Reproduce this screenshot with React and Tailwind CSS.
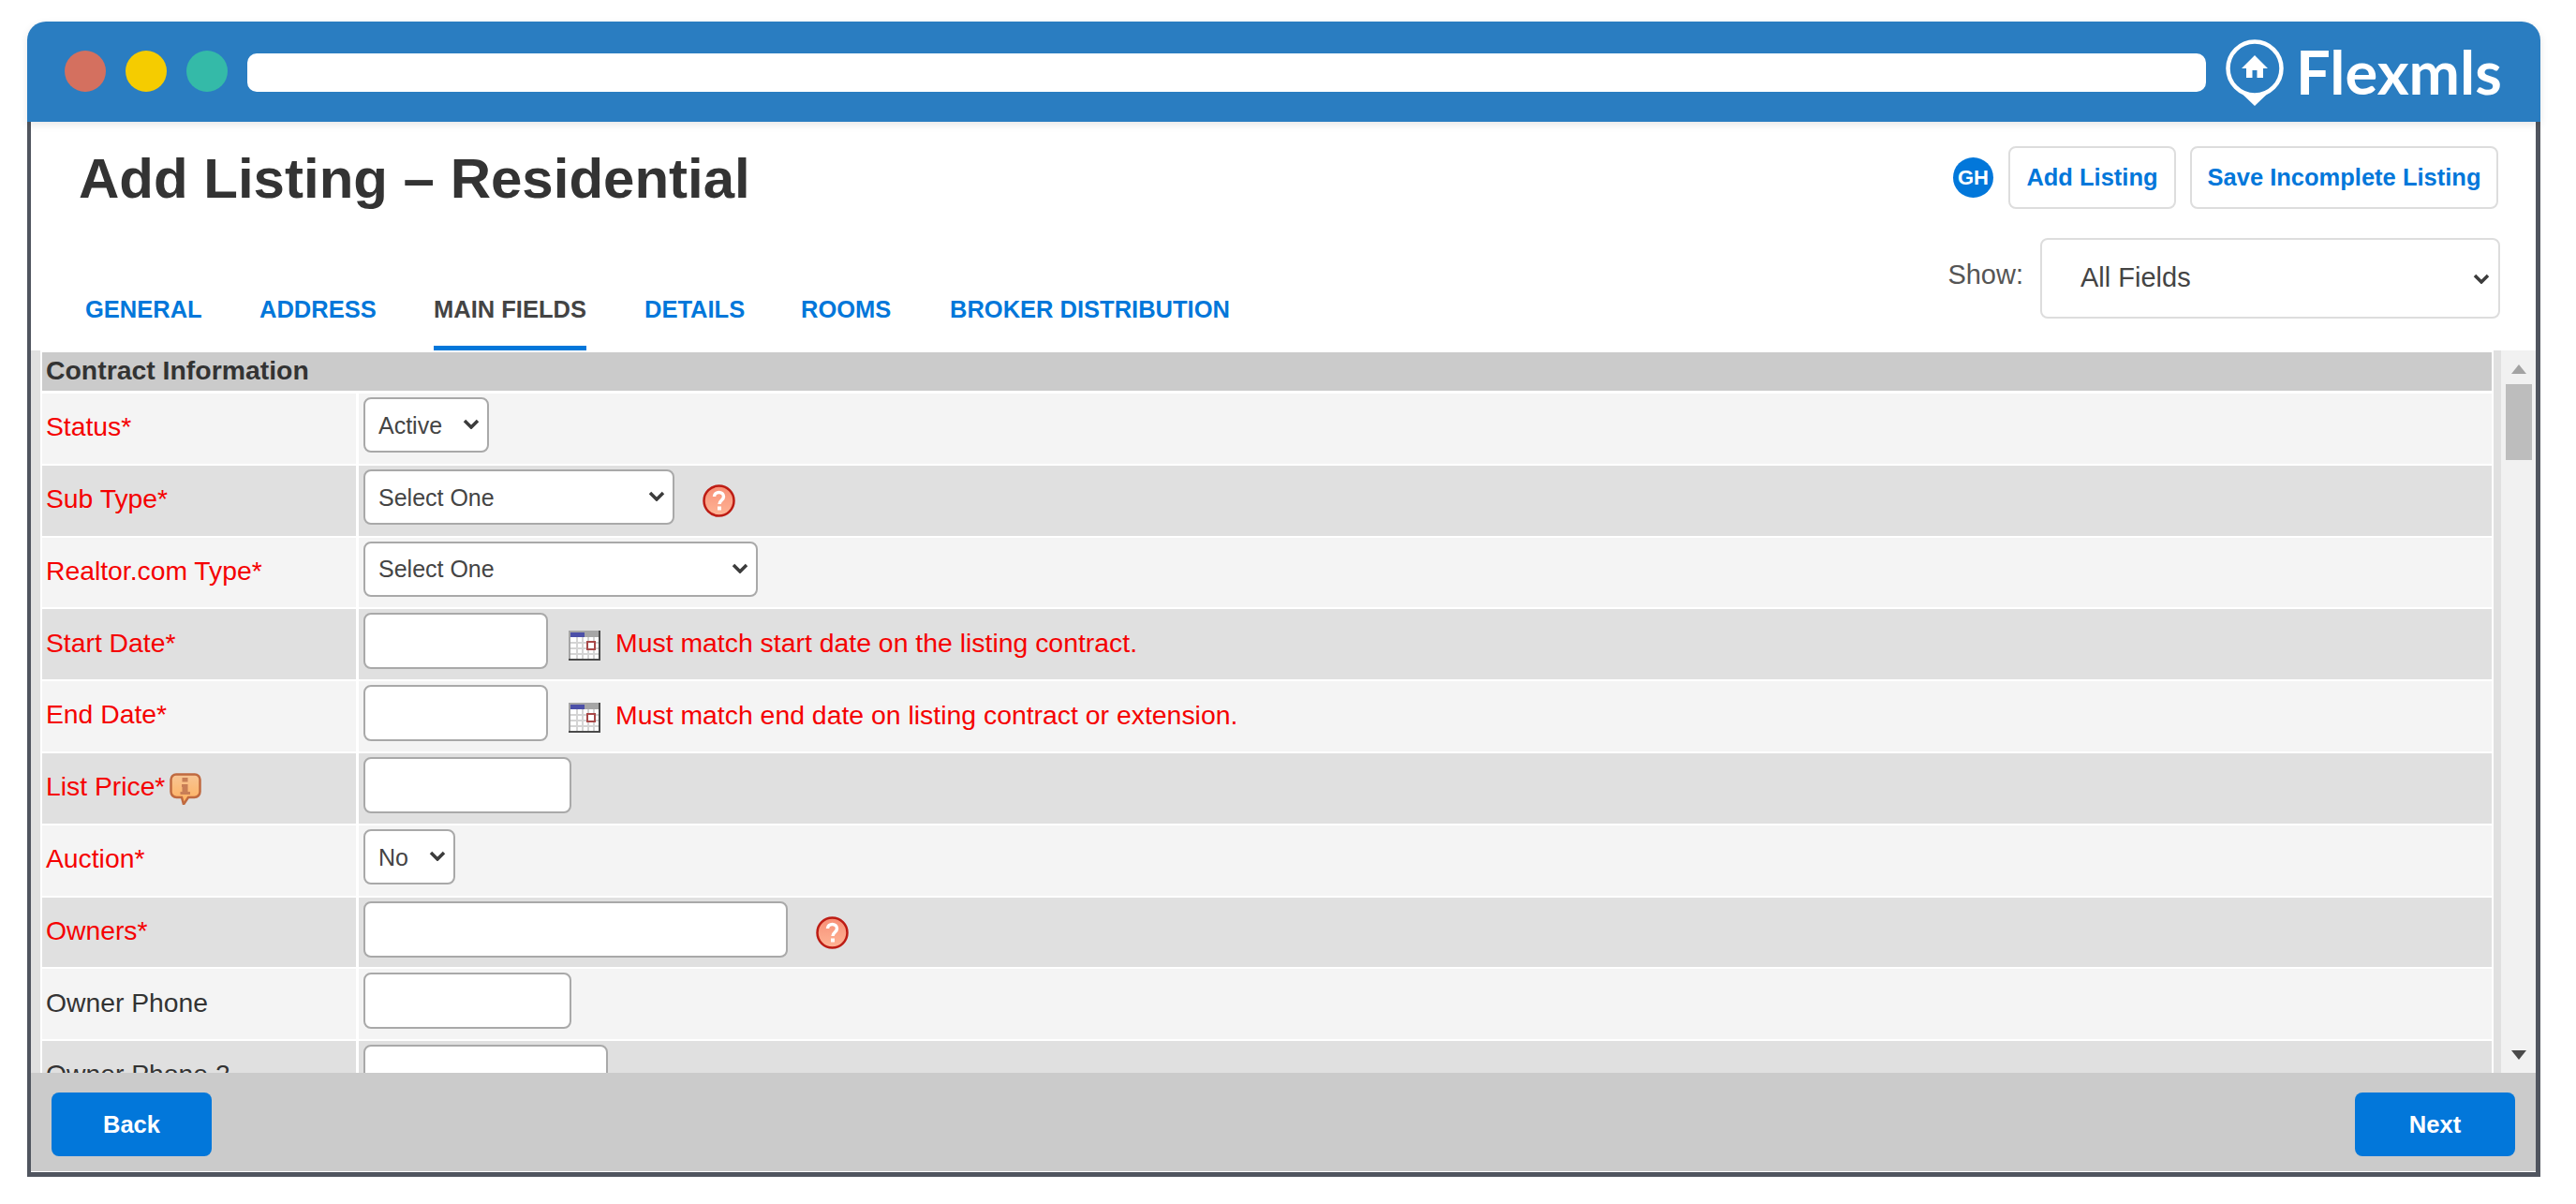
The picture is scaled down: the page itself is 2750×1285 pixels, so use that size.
import { useId } from 'react';

const SANS = "font-['Liberation_Sans',Arial,sans-serif]";

const tabs = [
  { id: 'general', label: 'GENERAL', width: 'w-[124px]' },
  { id: 'address', label: 'ADDRESS', width: 'w-[124px]' },
  { id: 'main', label: 'MAIN FIELDS', width: 'w-[163px]', active: true },
  { id: 'details', label: 'DETAILS', width: 'w-[105px]' },
  { id: 'rooms', label: 'ROOMS', width: 'w-[97px]' },
  { id: 'broker', label: 'BROKER DISTRIBUTION', width: 'w-[300px]' },
];

const rows = [
  { label: 'Status*', required: true, select: 'Active', control: 'w-[134px]' },
  { label: 'Sub Type*', required: true, select: 'Select One', control: 'w-[332px]', help: true },
  { label: 'Realtor.com Type*', required: true, select: 'Select One', control: 'w-[421px]' },
  { label: 'Start Date*', required: true, control: 'w-[197px]', date: true, note: 'Must match start date on the listing contract.' },
  { label: 'End Date*', required: true, control: 'w-[197px]', date: true, note: 'Must match end date on listing contract or extension.' },
  { label: 'List Price*', required: true, control: 'w-[222px]', info: true },
  { label: 'Auction*', required: true, select: 'No', control: 'w-[98px]' },
  { label: 'Owners*', required: true, control: 'w-[453px]', help: true },
  { label: 'Owner Phone', control: 'w-[222px]' },
  { label: 'Owner Phone 2', control: 'w-[261px]' },
];

function LogoPin() {
  return (
    <svg width="62" height="71" viewBox="0 0 62 71" className="shrink-0">
      <circle cx="31" cy="31" r="28.500" fill="none" stroke="#fff" strokeWidth="4.500" />
      <path d="M9 50L31 71 53 50A28.500 28.500 0 0 1 9 50z" fill="#fff" />
      <path d="M31 17L17 31h5v10h6.500v-8h5v8H40V31h5z" fill="#fff" />
    </svg>
  );
}

function Chevron({ className }) {
  return (
    <svg width="18" height="11" viewBox="0 0 18 11" className={className}>
      <path d="M2 2l7 7 7-7" fill="none" stroke="#3c3c3c" strokeWidth="3.500" />
    </svg>
  );
}

function CalendarIcon() {
  return (
    <svg width="34" height="32" viewBox="0 0 34 32" className="shrink-0" shapeRendering="crispEdges">
      <rect width="34" height="32" fill="#a6a6a6" />
      <rect x="2" y="2" width="15" height="5" fill="#4c50a8" />
      <rect x="32" width="2" height="32" fill="#4a4a4a" />
      <rect y="30" width="34" height="2" fill="#4a4a4a" />
      <rect x="2" y="7" width="30" height="23" fill="#fff" />
      {[6, 12, 18, 24].map((x) => (
        <rect key={x} x={x + 2} y="7" width="2" height="23" fill="#d4d4d4" />
      ))}
      {[12, 18, 24].map((y) => (
        <rect key={y} x="2" y={y} width="30" height="2" fill="#d4d4d4" />
      ))}
      <rect x="20" y="12" width="8" height="8" fill="#fff" stroke="#a84848" strokeWidth="2" />
    </svg>
  );
}

function HelpIcon() {
  const id = useId();
  return (
    <svg width="35" height="35" viewBox="0 0 35 35" className="shrink-0">
      <defs>
        <linearGradient id={id} x1="0" y1="0" x2="0" y2="1">
          <stop offset="0" stopColor="#f78f76" />
          <stop offset="1" stopColor="#ffb596" />
        </linearGradient>
      </defs>
      <circle cx="17.500" cy="17.500" r="16" fill={`url(#${id})`} stroke="#bd1c14" strokeWidth="2.500" />
      <path d="M12.500 13c0-6 10-6 10 0 0 4-4.500 4-4.500 8" fill="none" stroke="#fff" strokeWidth="3.500" />
      <rect x="16" y="23.500" width="4" height="4" fill="#fff" />
    </svg>
  );
}

function InfoIcon() {
  const id = useId();
  return (
    <svg width="34" height="34" viewBox="0 0 34 34" className="shrink-0">
      <defs>
        <linearGradient id={id} x1="0" y1="0" x2="0" y2="1">
          <stop offset="0" stopColor="#f7c595" />
          <stop offset="1" stopColor="#ffb05c" />
        </linearGradient>
      </defs>
      <path d="M7 1.500h20a5.500 5.500 0 0 1 5.500 5.500v13a6 6 0 0 1-6 6H20l-5 7.500-2-7.500H7.500a6 6 0 0 1-6-6V7A5.500 5.500 0 0 1 7 1.500z" fill={`url(#${id})`} stroke="#c06a40" strokeWidth="2.500" />
      <rect x="13.500" y="5" width="6" height="4.500" fill="#c87e56" />
      <path d="M13 12h6.500v8H22v3H11.500v-3h2v-5H13z" fill="#c87e56" />
    </svg>
  );
}

function FormSelect({ value, className }) {
  return (
    <div className={`relative h-[59px] ${className}`}>
      <select
        defaultValue={value}
        className="block h-full w-full appearance-none rounded-[8px] border-2 border-[#a9a9a9] bg-white pl-[14px] pt-[2px] text-[25px] text-[#444] outline-none"
      >
        <option>{value}</option>
      </select>
      <Chevron className="pointer-events-none absolute right-[10px] top-[23px]" />
    </div>
  );
}

function FieldRow({ row, index }) {
  const shade = index % 2 === 0 ? 'bg-[#f4f4f4]' : 'bg-[#e0e0e0]';
  const labelColor = row.required ? 'text-[#f50000]' : 'text-[#333]';

  return (
    <div className="flex h-[74.800px] shrink-0 gap-[3px]">
      <div className={`flex w-[335px] shrink-0 items-center pb-[4px] pl-[4px] text-[28.300px] ${shade} ${labelColor}`}>
        <span>{row.label}</span>
        {row.info && (
          <span className="ml-[5px] mt-[6px]">
            <InfoIcon />
          </span>
        )}
      </div>
      <div className={`flex flex-1 items-start pl-[5px] pt-[4px] ${shade}`}>
        {row.select ? (
          <FormSelect value={row.select} className={row.control} />
        ) : (
          <input type="text" className={`h-[60px] rounded-[8px] border-2 border-[#a9a9a9] bg-white ${row.control}`} />
        )}
        {row.date && (
          <div className="ml-[22px] mt-[19px]">
            <CalendarIcon />
          </div>
        )}
        {row.note && <span className="ml-[16px] mt-[11px] text-[28.400px] text-[#f50000]">{row.note}</span>}
        {row.help && (
          <div className="ml-[30px] mt-[16px]">
            <HelpIcon />
          </div>
        )}
      </div>
    </div>
  );
}

function Scrollbar() {
  return (
    <div className="flex w-[45px] shrink-0 bg-[#f1f1f1]">
      <div className="w-[8px] bg-[#e0e0e0]" />
      <div className="flex flex-1 flex-col items-center">
        <svg width="16" height="10" viewBox="0 0 16 10" className="mt-[15px]">
          <path d="M8 0l8 10H0z" fill="#a3a3a3" />
        </svg>
        <div className="mt-[11px] h-[81px] w-[28px] bg-[#bdbdbd]" />
        <svg width="16" height="10" viewBox="0 0 16 10" className="mt-auto mb-[14px]">
          <path d="M8 10L0 0h16z" fill="#4a4a4a" />
        </svg>
      </div>
    </div>
  );
}

export default function App() {
  return (
    <div className={`h-[1285px] w-[2750px] overflow-hidden bg-white pl-[29px] pt-[23px] ${SANS}`}>
      <div className="flex h-[1233px] w-[2683px] flex-col">
        <header className="relative z-10 flex h-[107px] shrink-0 items-start rounded-t-[20px] bg-[#2a7dc1] pl-[40px] pt-[31px] shadow-[0_3px_8px_rgba(0,0,0,0.1)]">
          <div className="flex gap-[21px]">
            <span className="h-[44px] w-[44px] rounded-full bg-[#d4705f]" />
            <span className="h-[44px] w-[44px] rounded-full bg-[#f5cc00]" />
            <span className="h-[44px] w-[44px] rounded-full bg-[#34baa8]" />
          </div>
          <div className="ml-[21px] mt-[3px] h-[41px] w-[2091px] rounded-[10px] bg-white" />
          <div className="ml-[21px] -mt-[12px] flex items-center">
            <LogoPin />
            <span className="ml-[13px] -mt-[2px] font-['Lato',sans-serif] text-[65px] font-bold leading-none text-white">Flexmls</span>
          </div>
        </header>

        <main className="flex min-h-0 flex-1 flex-col border-x-[5px] border-b-[5px] border-[#50555f] border-l-[4px]">
          <section className="flex h-[244px] shrink-0 justify-between bg-white">
            <div className="flex flex-col pl-[51px]">
              <h1 className="mt-[23px] text-[60px] font-bold leading-[76px] text-[#333]">Add Listing – Residential</h1>
              <nav className="mt-auto flex gap-[62px] pl-[7px]">
                {tabs.map((tab) => (
                  <a
                    key={tab.id}
                    className={`h-[68px] shrink-0 whitespace-nowrap border-b-[5px] pt-[9px] text-[25.500px] font-bold leading-[30px] ${tab.width} ${
                      tab.active ? 'border-[#0277da] text-[#444]' : 'border-transparent text-[#0277da]'
                    }`}
                  >
                    {tab.label}
                  </a>
                ))}
              </nav>
            </div>

            <div className="flex flex-col items-end pr-[38px] pt-[26px]">
              <div className="mr-[2px] flex items-center">
                <span className="flex h-[43px] w-[43px] items-center justify-center rounded-full bg-[#0277da] text-[22px] font-bold text-white">GH</span>
                <button type="button" className="ml-[16px] h-[67px] w-[179px] rounded-[8px] border-2 border-[#ddd] bg-white text-[25.500px] font-bold text-[#0277da]">
                  Add Listing
                </button>
                <button type="button" className="ml-[15px] h-[67px] w-[329px] rounded-[8px] border-2 border-[#ddd] bg-white text-[25.500px] font-bold text-[#0277da]">
                  Save Incomplete Listing
                </button>
              </div>
              <div className="mt-[31px] flex items-start">
                <span className="mt-[18px] text-[29px] text-[#555]">Show:</span>
                <div className="relative ml-[18px] h-[86px] w-[491px]">
                  <select
                    defaultValue="All Fields"
                    className="block h-full w-full appearance-none rounded-[8px] border-2 border-[#ddd] bg-white pl-[41px] text-[29px] text-[#444] outline-none"
                  >
                    <option>All Fields</option>
                  </select>
                  <Chevron className="pointer-events-none absolute right-[11px] top-[38px]" />
                </div>
              </div>
            </div>
          </section>

          <section className="flex min-h-0 flex-1 bg-white">
            <div className="w-[10px] shrink-0 bg-[#e0e0e0]" />
            <div className="ml-[2px] flex min-w-0 flex-1 flex-col gap-[2px] overflow-hidden pt-[2px]">
              <div className="mb-[1px] flex h-[41px] shrink-0 items-center bg-[#cbcbcb] pb-[2px] pl-[4px] text-[28.400px] font-bold text-[#333]">Contract Information</div>
              {rows.map((row, index) => (
                <FieldRow key={row.label} row={row} index={index} />
              ))}
            </div>
            <div className="w-[2px] shrink-0" />
            <Scrollbar />
          </section>

          <footer className="flex h-[106px] shrink-0 items-start justify-between border-b border-white bg-[#cbcbcb] px-[22px] pt-[21px]">
            <button type="button" className="h-[68px] w-[171px] rounded-[8px] bg-[#0277da] text-[25.500px] font-bold text-white">Back</button>
            <button type="button" className="h-[68px] w-[171px] rounded-[8px] bg-[#0277da] text-[25.500px] font-bold text-white">Next</button>
          </footer>
        </main>
      </div>
    </div>
  );
}
